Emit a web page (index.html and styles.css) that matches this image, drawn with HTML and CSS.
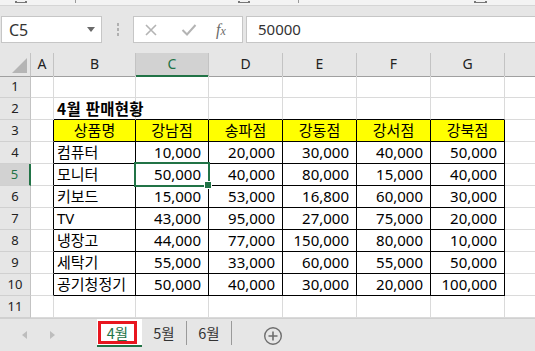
FILE: index.html
```html
<!DOCTYPE html>
<html lang="ko">
<head>
    <meta charset="UTF-8">
    <meta name="viewport" content="width=device-width, initial-scale=1.0">
    <title>4월 판매현황 - Excel</title>
    <link rel="stylesheet" href="styles.css">
</head>
<body>

    <div class="ribbon-edge">
        <span class="rb-label first"></span>
        <span class="rb-mark"></span>
        <span class="rb-label second"></span>
        <span class="rb-mark"></span>
        <span class="rb-label third"></span>
        <span class="rb-mark"></span>
    </div>

    <div class="formula-bar">
        <div class="name-box">
            <span>C5</span>
            <span class="drop-arrow"></span>
        </div>
        <div class="bar-dots"><i></i><i></i><i></i></div>
        <div class="fx-box">
            <svg class="fx-icon" width="14" height="14" viewBox="0 0 14 14">
                <path d="M2 2 L12 12 M12 2 L2 12" stroke="#b4b4b4" stroke-width="1.6" fill="none"/>
            </svg>
            <svg class="fx-icon" width="16" height="14" viewBox="0 0 16 14">
                <path d="M1.5 7 L6 11.5 L14.5 2" stroke="#b4b4b4" stroke-width="2" fill="none"/>
            </svg>
            <span class="fx-text">f<span>x</span></span>
        </div>
        <div class="formula-input">50000</div>
    </div>

    <div class="sheet">
        <div class="row hdr-row">
            <div class="c corner"><span class="corner-tri"></span></div>
            <div class="c ch">A</div>
            <div class="c ch">B</div>
            <div class="c ch active-col">C</div>
            <div class="c ch">D</div>
            <div class="c ch">E</div>
            <div class="c ch">F</div>
            <div class="c ch">G</div>
            <div class="c ch"></div>
        </div>

        <div class="row">
            <div class="c rh">1</div>
            <div class="c"></div><div class="c"></div><div class="c"></div><div class="c"></div>
            <div class="c"></div><div class="c"></div><div class="c"></div><div class="c"></div>
        </div>

        <div class="row">
            <div class="c rh">2</div>
            <div class="c"></div>
            <div class="c tt title">4월 판매현황</div>
            <div class="c tt"></div><div class="c tt"></div><div class="c tt"></div>
            <div class="c tt"></div><div class="c tt"></div><div class="c"></div>
        </div>

        <div class="row">
            <div class="c rh">3</div>
            <div class="c tl"></div>
            <div class="c t head">상품명</div>
            <div class="c t head">강남점</div>
            <div class="c t head">송파점</div>
            <div class="c t head">강동점</div>
            <div class="c t head">강서점</div>
            <div class="c t head">강북점</div>
            <div class="c"></div>
        </div>

        <div class="row">
            <div class="c rh">4</div>
            <div class="c tl"></div>
            <div class="c t">컴퓨터</div>
            <div class="c t num">10,000</div>
            <div class="c t num">20,000</div>
            <div class="c t num">30,000</div>
            <div class="c t num">40,000</div>
            <div class="c t num">50,000</div>
            <div class="c"></div>
        </div>

        <div class="row">
            <div class="c rh active-row">5</div>
            <div class="c tl"></div>
            <div class="c t">모니터</div>
            <div class="c t num sel">50,000</div>
            <div class="c t num">40,000</div>
            <div class="c t num">80,000</div>
            <div class="c t num">15,000</div>
            <div class="c t num">40,000</div>
            <div class="c"></div>
        </div>

        <div class="row">
            <div class="c rh">6</div>
            <div class="c tl"></div>
            <div class="c t">키보드</div>
            <div class="c t num">15,000</div>
            <div class="c t num">53,000</div>
            <div class="c t num">16,800</div>
            <div class="c t num">60,000</div>
            <div class="c t num">30,000</div>
            <div class="c"></div>
        </div>

        <div class="row">
            <div class="c rh">7</div>
            <div class="c tl"></div>
            <div class="c t">TV</div>
            <div class="c t num">43,000</div>
            <div class="c t num">95,000</div>
            <div class="c t num">27,000</div>
            <div class="c t num">75,000</div>
            <div class="c t num">20,000</div>
            <div class="c"></div>
        </div>

        <div class="row">
            <div class="c rh">8</div>
            <div class="c tl"></div>
            <div class="c t">냉장고</div>
            <div class="c t num">44,000</div>
            <div class="c t num">77,000</div>
            <div class="c t num">150,000</div>
            <div class="c t num">80,000</div>
            <div class="c t num">10,000</div>
            <div class="c"></div>
        </div>

        <div class="row">
            <div class="c rh">9</div>
            <div class="c tl"></div>
            <div class="c t">세탁기</div>
            <div class="c t num">55,000</div>
            <div class="c t num">33,000</div>
            <div class="c t num">60,000</div>
            <div class="c t num">55,000</div>
            <div class="c t num">50,000</div>
            <div class="c"></div>
        </div>

        <div class="row">
            <div class="c rh">10</div>
            <div class="c tl"></div>
            <div class="c t">공기청정기</div>
            <div class="c t num">50,000</div>
            <div class="c t num">40,000</div>
            <div class="c t num">30,000</div>
            <div class="c t num">20,000</div>
            <div class="c t num">100,000</div>
            <div class="c"></div>
        </div>

        <div class="row">
            <div class="c rh">11</div>
            <div class="c"></div><div class="c"></div><div class="c"></div><div class="c"></div>
            <div class="c"></div><div class="c"></div><div class="c"></div><div class="c"></div>
        </div>
    </div>

    <div class="tabs">
        <div class="tab-nav">
            <span class="nav-left"></span>
            <span class="nav-right"></span>
        </div>
        <div class="tab active"><span class="mark">4월</span></div>
        <div class="tab">5월</div>
        <div class="tab">6월</div>
        <svg class="add-sheet" width="20" height="20" viewBox="0 0 20 20">
            <circle cx="10" cy="10" r="8.3" stroke="#6e6e6e" stroke-width="1.4" fill="none"/>
            <path d="M10 5.5 V14.5 M5.5 10 H14.5" stroke="#6e6e6e" stroke-width="1.6"/>
        </svg>
    </div>

</body>
</html>
```

FILE: styles.css
```css
* {
    margin: 0;
    padding: 0;
    box-sizing: border-box;
}

body {
    width: 535px;
    height: 351px;
    overflow: hidden;
    background-color: #e6e6e6;
    font-family: 'Noto Sans', 'Noto Sans CJK KR', sans-serif;
    color: #000;
}


.ribbon-edge {
    height: 6px;
    background-color: #f3f3f3;
    border-bottom: 1px solid #d5d5d5;
    display: flex;
    overflow: hidden;
}

.rb-label {
    width: 20px;
    height: 2px;
    margin-top: 1px;
    border-left: 2px solid #777;
    border-right: 2px solid #777;
    border-bottom: 1px solid #777;
}

.rb-label.first { margin-left: 15px; }
.rb-label.second { margin-left: 162px; }
.rb-label.third { margin-left: 176px; }

.rb-mark {
    width: 1px;
    height: 3px;
    background-color: #9a9a9a;
    margin-left: 48px;
}


.formula-bar {
    display: flex;
    height: 47px;
    padding: 10px 0 10px 1px;
}

.name-box {
    width: 101px;
    height: 27px;
    background-color: #fff;
    border: 1px solid #c6c6c6;
    display: flex;
    align-items: center;
    justify-content: space-between;
    padding: 0 6px 0 7px;
    font-size: 16px;
    color: #333;
}

.drop-arrow {
    border-top: 5px solid #6a6a6a;
    border-left: 4px solid transparent;
    border-right: 4px solid transparent;
}

.bar-dots {
    width: 31px;
    display: flex;
    flex-direction: column;
    align-items: center;
    justify-content: center;
    gap: 2px;
}

.bar-dots i {
    width: 2px;
    height: 3px;
    background-color: #b0b0b0;
}

.fx-box {
    width: 110px;
    height: 27px;
    background-color: #fff;
    border: 1px solid #c6c6c6;
    display: flex;
    align-items: center;
    padding-left: 10px;
}

.fx-icon + .fx-icon {
    margin-left: 23px;
}

.fx-text {
    margin-left: 19px;
    font-family: 'Liberation Serif', serif;
    font-style: italic;
    font-size: 16px;
    color: #6a6a6a;
}

.fx-text span {
    font-size: 12px;
}

.formula-input {
    flex: 1;
    height: 27px;
    margin-left: 3px;
    background-color: #fff;
    border: 1px solid #c6c6c6;
    border-right: none;
    padding-left: 11px;
    font-size: 15px;
    line-height: 25px;
    color: #333;
}


.sheet {
    background-color: #fff;
    height: 265px;
    overflow: hidden;
}

.row {
    display: grid;
    grid-template-columns: 31px 23px 82px 73px 74px 74px 74px 74px 40px;
    height: 22px;
}

.c {
    border-right: 1px solid #dadada;
    border-bottom: 1px solid #dadada;
    font-family: 'Noto Sans', 'Noto Sans CJK KR', sans-serif;
    font-size: 15px;
    line-height: 21px;
    padding: 0 3px;
    white-space: nowrap;
}

.hdr-row {
    height: 23px;
}

.hdr-row .c {
    background-color: #e6e6e6;
    border-right-color: #c3c3c3;
    border-bottom-color: #a0a0a0;
    text-align: center;
    font-size: 14px;
    line-height: 22px;
    color: #222;
}

.corner {
    position: relative;
}

.corner-tri {
    position: absolute;
    right: 3px;
    bottom: 3px;
    border-bottom: 15px solid #b5b5b5;
    border-left: 15px solid transparent;
}

.hdr-row .active-col {
    background-color: #d2d2d2;
    border-bottom: 2px solid #217346;
    color: #217346;
}

.rh {
    background-color: #e6e6e6;
    border-right-color: #c3c3c3;
    border-bottom-color: #d0d0d0;
    text-align: center;
    font-size: 13px;
    color: #222;
}

.rh.active-row {
    background-color: #d2d2d2;
    border-right: 2px solid #217346;
    color: #217346;
}

.tt {
    border-bottom-color: #000;
}

.tl {
    border-right-color: #000;
}

.t {
    border-right-color: #000;
    border-bottom-color: #000;
}

.title {
    font-weight: bold;
    font-family: 'Noto Sans CJK KR', sans-serif;
    font-size: 15.5px;
    letter-spacing: 0.3px;
}

.head {
    background-color: #ffff00;
    text-align: center;
}

.num {
    text-align: right;
    padding-right: 7px;
}

.sel {
    position: relative;
}

.sel::after {
    content: '';
    position: absolute;
    left: -2px;
    top: -2px;
    right: -2px;
    bottom: -2px;
    border: 2px solid #217346;
}

.sel::before {
    content: '';
    position: absolute;
    right: -4px;
    bottom: -4px;
    width: 6px;
    height: 6px;
    background-color: #217346;
    border: 1px solid #fff;
    z-index: 1;
}


.tabs {
    height: 33px;
    display: flex;
    align-items: flex-start;
    border-top: 1px solid #d0d0d0;
    font-family: 'Noto Sans CJK KR', sans-serif;
    font-size: 14.5px;
    color: #333;
}

.tab-nav {
    width: 97px;
    height: 32px;
    display: flex;
    align-items: center;
    padding-left: 22px;
}

.nav-left {
    border-right: 5px solid #bdbdbd;
    border-top: 4px solid transparent;
    border-bottom: 4px solid transparent;
}

.nav-right {
    margin-left: 23px;
    border-left: 5px solid #bdbdbd;
    border-top: 4px solid transparent;
    border-bottom: 4px solid transparent;
}

.tab {
    width: 45px;
    margin-top: 2px;
    height: 24px;
    line-height: 24px;
    text-align: center;
    border-right: 1px solid #9a9a9a;
}

.tab.active {
    margin-top: 0;
    height: 28px;
    background-color: #fff;
    border-right: none;
    border-bottom: 2px solid #217346;
    padding: 2px 0 0 1px;
    color: #217346;
}

.mark {
    display: block;
    width: 39px;
    height: 23px;
    line-height: 17px;
    border: 3px solid #e8161f;
}

.add-sheet {
    margin: 7px 0 0 31px;
}
```
